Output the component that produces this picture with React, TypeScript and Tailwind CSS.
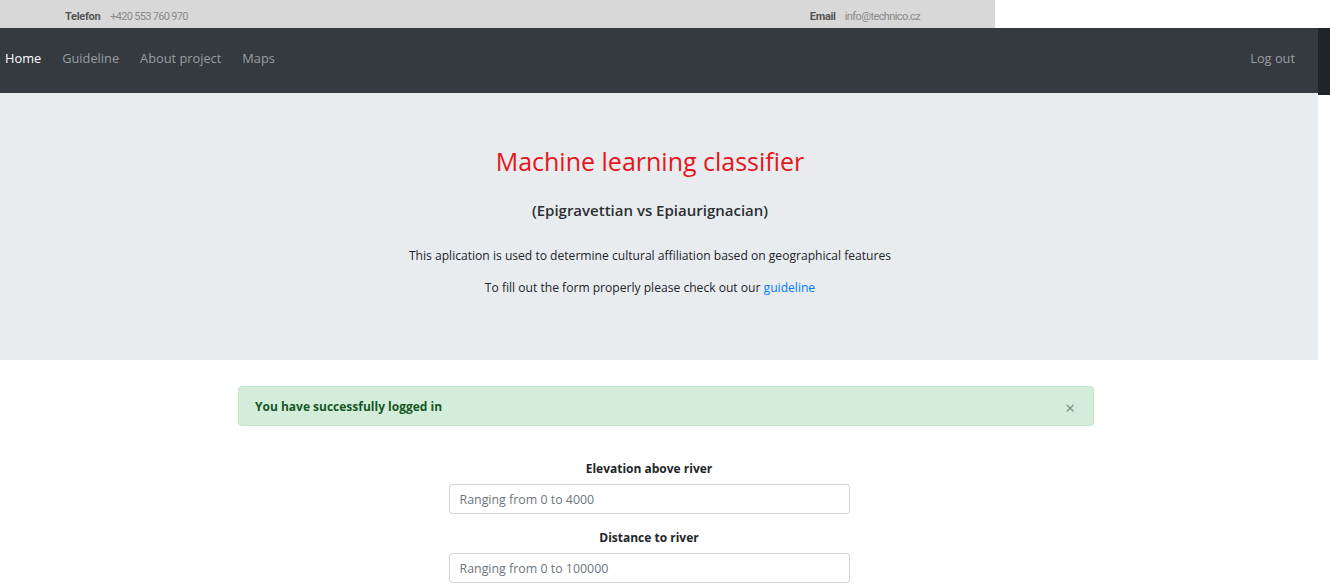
const navLinks = ["Guideline", "About project", "Maps"];

const fields = [
  { label: "Elevation above river", placeholder: "Ranging from 0 to 4000" },
  { label: "Distance to river", placeholder: "Ranging from 0 to 100000" },
];

const App = () => {
  return (
    <div className="w-[1330px] min-h-[586px] bg-white font-['Open_Sans',sans-serif] text-[#212529] overflow-hidden">
      {/* contact strip */}
      <div className="flex h-[28px] w-[995px] items-center bg-[#d8d8d8] pt-[6px] font-['Roboto',sans-serif] text-[11px]">
        <div className="ml-[65px] flex items-center gap-[10px]">
          <span className="font-bold tracking-[-0.3px] text-[#555]">Telefon</span>
          <span className="tracking-[-0.7px] text-[#888]">+420 553 760 970</span>
        </div>
        <div className="ml-auto mr-[75px] flex items-center gap-[9px]">
          <span className="font-bold tracking-[-0.3px] text-[#555]">Email</span>
          <span className="tracking-[-0.6px] text-[#888]">info@technico.cz</span>
        </div>
      </div>

      {/* navbar */}
      <div className="flex h-[65px]">
        <nav className="flex h-[65px] w-[1318px] items-center bg-[#343a40] pb-[4px] text-[12.8px]">
          <a className="ml-[5px] text-white">Home</a>
          {navLinks.map((l) => (
            <a key={l} className="ml-[21px] text-[#9a9da0]">
              {l}
            </a>
          ))}
          <a className="ml-auto mr-[23px] text-[#9a9da0]">Log out</a>
        </nav>
        <div className="h-[67px] w-[12px] shrink-0 bg-[#212529]" />
      </div>

      {/* jumbotron */}
      <div className="flex h-[267px] w-[1318px] flex-col items-center bg-[#e9ecef] pr-[18px]">
        <h1 className="mt-[50px] text-[25px] leading-[36px] text-[#e3161c]">
          Machine learning classifier
        </h1>
        <h2 className="mt-[20px] text-[15px] font-semibold leading-[22px] text-[#2b2f33]">
          (Epigravettian vs Epiaurignacian)
        </h2>
        <p className="mt-[24px] text-[12.1px] leading-[22px]">
          This aplication is used to determine cultural affiliation based on geographical features
        </p>
        <p className="mt-[10px] text-[12.1px] leading-[22px]">
          To fill out the form properly please check out our{" "}
          <a className="text-[#007bff]">guideline</a>
        </p>
      </div>

      {/* alert */}
      <div className="ml-[238px] mt-[26px] flex h-[40px] w-[856px] items-center justify-between rounded-[4px] border border-[#c3e6cb] bg-[#d4edda] pl-[16px] pr-[18px] pt-[2px] text-[12px] font-bold text-[#155724]">
        <span>You have successfully logged in</span>
        <span className="text-[17px] font-normal leading-none text-[#6a8f72]">×</span>
      </div>

      {/* form */}
      <form className="mt-[34px] flex flex-col items-center pr-[32px]">
        {fields.map((f) => (
          <div key={f.label} className="mb-[15px] flex flex-col items-center">
            <label className="mb-[6px] text-[12px] font-bold leading-[18px]">{f.label}</label>
            <input
              className="h-[30px] w-[401px] rounded-[3px] border border-[#ced4da] bg-white px-[10px] text-[12.4px] placeholder:text-[#6c757d]"
              placeholder={f.placeholder}
            />
          </div>
        ))}
      </form>
    </div>
  );
};

export default App;
